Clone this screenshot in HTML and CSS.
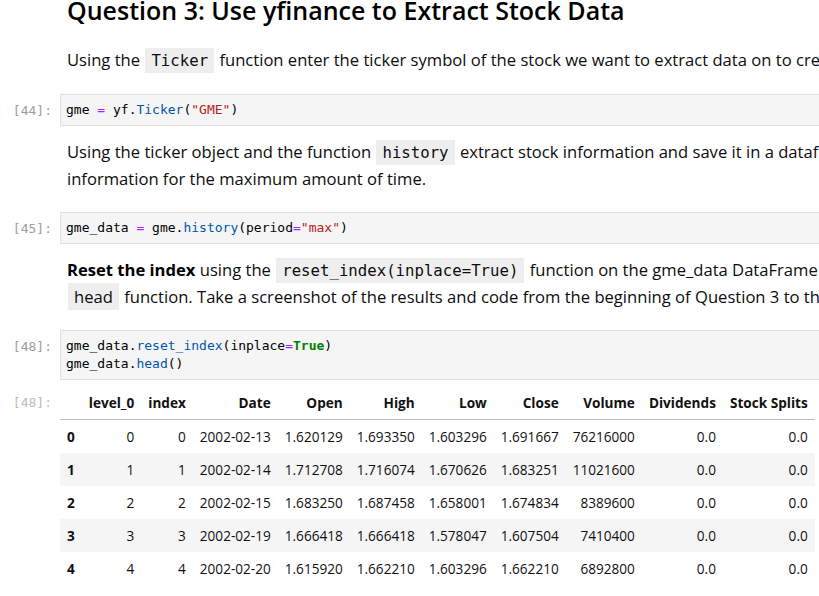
FILE: index.html
```html
<!DOCTYPE html>
<html>
<head>
<meta charset="utf-8">
<link rel="stylesheet" href="styles.css">
</head>
<body>
<div class="notebook">
  <div class="cell md-cell first">
    <div class="prompt"></div>
    <div class="md">
      <h2 class="title">Question 3: Use yfinance to Extract Stock Data</h2>
      <p>Using the <code class="pill">Ticker</code> function enter the ticker symbol of the stock we want to extract data on to create a ticker object. The stock is GameStop and its ticker symbol is <code class="pill">GME</code>.</p>
    </div>
  </div>

  <div class="cell code-cell">
    <div class="prompt in">[44]:</div>
    <div class="editor"><pre><span class="v">gme</span> <span class="op">=</span> <span class="v">yf</span>.<span class="pr">Ticker</span>(<span class="st">"GME"</span>)</pre></div>
  </div>

  <div class="cell md-cell">
    <div class="prompt"></div>
    <div class="md">
      <p>Using the ticker object and the function <code class="pill">history</code> extract stock information and save it in a dataframe named <code class="pill">gme_data</code>. Set the <code class="pill">period</code> parameter to <code class="pill">max</code> so we get<br>information for the maximum amount of time.</p>
    </div>
  </div>

  <div class="cell code-cell">
    <div class="prompt in">[45]:</div>
    <div class="editor"><pre><span class="v">gme_data</span> <span class="op">=</span> <span class="v">gme</span>.<span class="pr">history</span>(<span class="v">period</span><span class="op">=</span><span class="st">"max"</span>)</pre></div>
  </div>

  <div class="cell md-cell">
    <div class="prompt"></div>
    <div class="md">
      <p><strong>Reset the index</strong> using the <code class="pill">reset_index(inplace=True)</code> function on the gme_data DataFrame and display the first five rows of the gme_data dataframe using the<br><span class="pill sans">head</span> function. Take a screenshot of the results and code from the beginning of Question 3 to the results below and upload it to the quiz.</p>
    </div>
  </div>

  <div class="cell code-cell">
    <div class="prompt in">[48]:</div>
    <div class="editor"><pre><span class="v">gme_data</span>.<span class="pr">reset_index</span>(<span class="v">inplace</span><span class="op">=</span><span class="kw">True</span>)
<span class="v">gme_data</span>.<span class="pr">head</span>()</pre></div>
  </div>

  <div class="cell out-cell">
    <div class="prompt out">[48]:</div>
    <div class="output">
      <table class="df">
        <thead>
          <tr><th></th><th>level_0</th><th>index</th><th>Date</th><th>Open</th><th>High</th><th>Low</th><th>Close</th><th>Volume</th><th>Dividends</th><th>Stock Splits</th></tr>
        </thead>
        <tbody>
          <tr><th>0</th><td>0</td><td>0</td><td>2002-02-13</td><td>1.620129</td><td>1.693350</td><td>1.603296</td><td>1.691667</td><td>76216000</td><td>0.0</td><td>0.0</td></tr>
          <tr><th>1</th><td>1</td><td>1</td><td>2002-02-14</td><td>1.712708</td><td>1.716074</td><td>1.670626</td><td>1.683251</td><td>11021600</td><td>0.0</td><td>0.0</td></tr>
          <tr><th>2</th><td>2</td><td>2</td><td>2002-02-15</td><td>1.683250</td><td>1.687458</td><td>1.658001</td><td>1.674834</td><td>8389600</td><td>0.0</td><td>0.0</td></tr>
          <tr><th>3</th><td>3</td><td>3</td><td>2002-02-19</td><td>1.666418</td><td>1.666418</td><td>1.578047</td><td>1.607504</td><td>7410400</td><td>0.0</td><td>0.0</td></tr>
          <tr><th>4</th><td>4</td><td>4</td><td>2002-02-20</td><td>1.615920</td><td>1.662210</td><td>1.603296</td><td>1.662210</td><td>6892800</td><td>0.0</td><td>0.0</td></tr>
        </tbody>
      </table>
    </div>
  </div>
</div>
</body>
</html>
```
FILE: styles.css
```css
html, body {
  margin: 0;
  padding: 0;
  background: #ffffff;
  overflow: hidden;
}
body {
  font-family: "Open Sans", "Noto Sans", sans-serif;
  color: #111;
}
.notebook {
  display: flex;
  flex-direction: column;
  width: 1500px;
}
.cell {
  display: grid;
  grid-template-columns: 60px 1fr;
}
.prompt {
  font-family: "DejaVu Sans Mono", monospace;
  font-size: 13px;
  text-align: right;
  padding-right: 8px;
  color: #9e9e9e;
  line-height: 17px;
}
.prompt.out {
  color: #bdbdbd;
}
.md {
  padding-left: 7px;
}
.md-cell {
  padding: 12px 0 20px;
}
.md-cell.first {
  padding-top: 0;
  padding-bottom: 21px;
}
.title {
  margin: -8px 0 0;
  font-size: 25px;
  font-weight: 600;
  line-height: 36px;
  color: #000;
  padding-bottom: 18px;
}
.md p {
  margin: 0;
  font-size: 16.6px;
  line-height: 27px;
  white-space: nowrap;
  color: #0d0d0d;
}
.md strong {
  font-weight: 700;
  color: #000;
}
.pill {
  background: #eeeeee;
  font-family: "DejaVu Sans Mono", monospace;
  font-size: 15.7px;
  line-height: 1;
  padding: 3px 6px;
  margin: 0 1px;
}
.pill.sans {
  font-family: "Open Sans", "Noto Sans", sans-serif;
  font-size: 16.6px;
  padding: 2px 6px;
}
.code-cell .prompt {
  padding-top: 8px;
}
.editor {
  background: #f5f5f5;
  border: 1px solid #e0e0e0;
  padding: 6px 5px;
}
.editor pre {
  margin: 0;
  font-family: "DejaVu Sans Mono", monospace;
  font-size: 13px;
  line-height: 18px;
  color: #000;
}
.op { color: #aa22ff; }
.pr { color: #0055aa; }
.st { color: #ba2121; }
.kw { color: #008000; font-weight: bold; }
.out-cell {
  padding-top: 5px;
}
.out-cell .prompt {
  padding-top: 9px;
}
.df {
  border-collapse: collapse;
  font-size: 13.6px;
  color: #111;
}
.df th, .df td {
  padding: 7px 7px;
  text-align: right;
  line-height: 19px;
  white-space: nowrap;
}
.df thead th {
  font-weight: 700;
  border-bottom: 1px solid #bdbdbd;
  padding-top: 8px;
}
.df tbody th {
  text-align: left;
  font-weight: 700;
}
.df tbody tr:nth-child(even) {
  background: #f5f5f5;
}
```
